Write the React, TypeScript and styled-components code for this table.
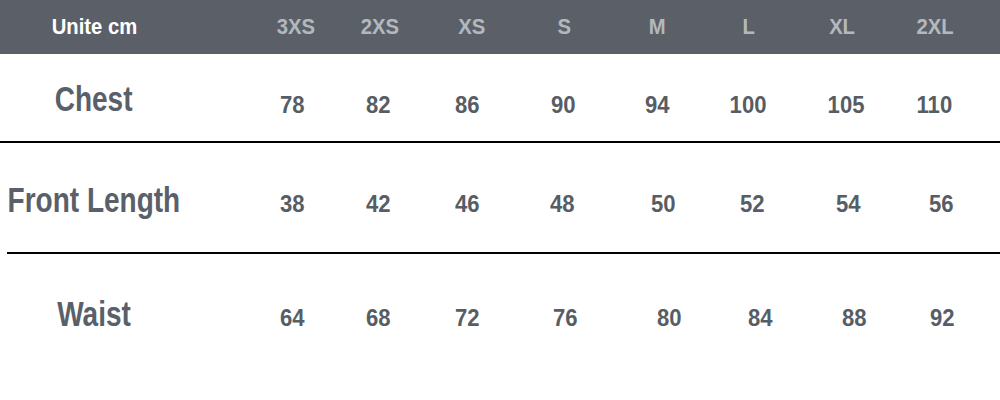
import React from "react";
import styled, { createGlobalStyle } from "styled-components";

const Global = createGlobalStyle`
  html, body { margin: 0; padding: 0; background: #ffffff; }
  body { width: 1000px; height: 400px; overflow: hidden; }
`;

const FONT = `"Liberation Sans", Arial, Helvetica, sans-serif`;

const Table = styled.div`
  width: 1000px;
  font-family: ${FONT};
  font-weight: 700;
`;

const Row = styled.div<{ $cols: string; $height: number }>`
  display: grid;
  grid-template-columns: 249px ${(p) => p.$cols};
  height: ${(p) => p.$height}px;
  align-items: start;
`;

const HeaderRow = styled(Row)`
  background: #5b6068;
  align-items: center;
`;

const Cell = styled.div<{ $top?: number; $label?: boolean }>`
  display: flex;
  justify-content: center;
  padding-top: ${(p) => p.$top ?? 0}px;
  padding-right: ${(p) => (p.$label ? 61 : 0)}px;
  white-space: nowrap;
`;

const Text = styled.span<{ $size: number; $color: string; $scale: number }>`
  display: inline-block;
  font-size: ${(p) => p.$size}px;
  line-height: 1;
  color: ${(p) => p.$color};
  transform: scaleX(${(p) => p.$scale});
  transform-origin: center;
`;

const Rule = styled.div<{ $inset: number }>`
  height: 2px;
  margin-left: ${(p) => p.$inset}px;
  background: #000000;
`;

const sizes = ["3XS", "2XS", "XS", "S", "M", "L", "XL", "2XL"];

const rows = [
  {
    label: "Chest",
    values: ["78", "82", "86", "90", "94", "100", "105", "110"],
    cols: "86px 86px 92px 100px 88px 94px 102px 74px",
    height: 87,
    labelTop: 27,
    valueTop: 39,
  },
  {
    label: "Front Length",
    values: ["38", "42", "46", "48", "50", "52", "54", "56"],
    cols: "86px 86px 92px 98px 104px 74px 118px 68px",
    height: 109,
    labelTop: 39,
    valueTop: 49,
  },
  {
    label: "Waist",
    values: ["64", "68", "72", "76", "80", "84", "88", "92"],
    cols: "86px 86px 92px 104px 104px 78px 110px 66px",
    height: 143,
    labelTop: 42,
    valueTop: 52,
  },
];

const LABEL = "#5a6069";
const NUM = "#575d65";

export default function App() {
  return (
    <>
      <Global />
      <Table>
        <HeaderRow $cols="94px 74px 110px 74px 112px 72px 114px 72px" $height={54}>
          <Cell $label>
            <Text $size={22} $color="#ffffff" $scale={0.92}>
              Unite cm
            </Text>
          </Cell>
          {sizes.map((s) => (
            <Cell key={s}>
              <Text $size={22} $color="#b3b8be" $scale={0.92}>
                {s}
              </Text>
            </Cell>
          ))}
        </HeaderRow>
        {rows.map((r, i) => (
          <React.Fragment key={r.label}>
            <Row $cols={r.cols} $height={r.height}>
              <Cell $label $top={r.labelTop}>
                <Text $size={35} $color={LABEL} $scale={0.8}>
                  {r.label}
                </Text>
              </Cell>
              {r.values.map((v, j) => (
                <Cell key={j} $top={r.valueTop}>
                  <Text $size={24} $color={NUM} $scale={0.92}>
                    {v}
                  </Text>
                </Cell>
              ))}
            </Row>
            {i < rows.length - 1 && <Rule $inset={i === 0 ? 0 : 7} />}
          </React.Fragment>
        ))}
      </Table>
    </>
  );
}
